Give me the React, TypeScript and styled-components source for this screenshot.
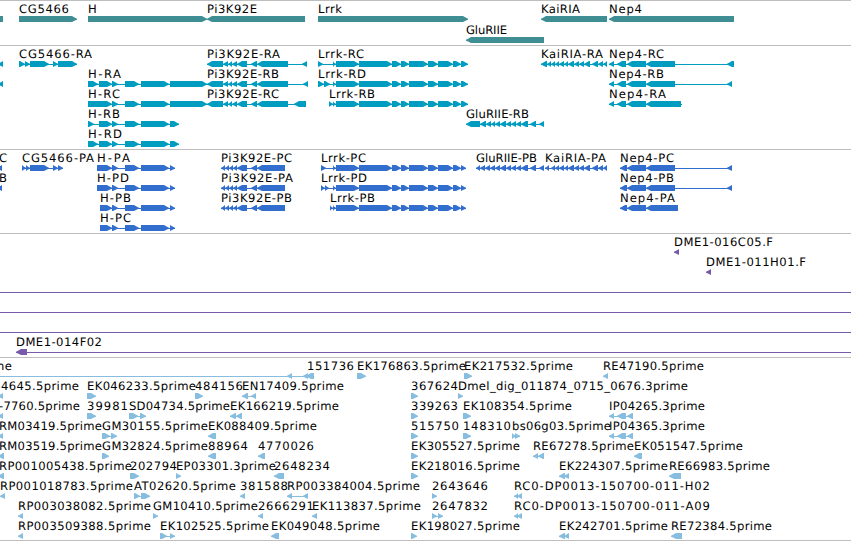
import React from 'react';
import styled, { createGlobalStyle } from 'styled-components';

const GlobalStyle = createGlobalStyle`
  body { margin: 0; background: #fff; overflow: hidden; }
`;

const Browser = styled.main`
  display: flex;
  flex-direction: column;
  width: 851px;
  height: 541px;
  overflow: hidden;
  background: #fff;
  border-bottom: 1px solid #bebebe;
  box-sizing: border-box;
`;

const Track = styled.section<{ $height: number; $color: string; $gap?: number }>`
  display: flex;
  flex-direction: column;
  flex: none;
  box-sizing: border-box;
  height: ${p => p.$height}px;
  padding-top: 1px;
  gap: ${p => p.$gap ?? 0}px;
  border-top: 1px solid #bebebe;
  color: ${p => p.$color};
`;

const Lane = styled.svg`
  display: block;
  flex: none;
  width: 851px;
  height: 20px;
  overflow: visible;
  fill: currentColor;
`;

const Name = styled.text`
  fill: #000;
  font-family: 'DejaVu Sans', sans-serif;
  font-size: 11.6px;
  text-rendering: geometricPrecision;
  white-space: pre;
`;

type Feature = {
  name?: string;
  x?: number;
  end?: number;
  dir?: 1 | -1;
  exons?: number[][];
  line?: [number, number];
};

/* A block whose last five pixels narrow to a point in the reading direction. */
function Exon({ a, b, dir }: { a: number; b: number; dir: 1 | -1 }) {
  const head = Math.min(5, b - a);
  const d = dir === 1
    ? `M${a} 14H${b - head}L${b - 2} 15.7L${b} 16.7V17.7L${b - 2} 18.6L${b - head} 20H${a}Z`
    : `M${b} 14H${a + head}L${a + 2} 15.7L${a} 16.7V17.7L${a + 2} 18.6L${a + head} 20H${b}Z`;
  return <path d={d} />;
}

function Gene({ f }: { f: Feature }) {
  const exons = f.exons ?? [];
  const span = f.line ?? (exons.length > 1 ? [exons[0][0], exons[exons.length - 1][1]] : null);
  return (
    <g>
      {span && <rect x={span[0]} y={17} width={span[1] - span[0]} height={1} />}
      {exons.map(([a, b], i) => <Exon key={i} a={a} b={b} dir={f.dir ?? 1} />)}
      {f.name && (
        <Name x={f.x} y={11} textLength={f.end! - f.x!} lengthAdjust="spacing">{f.name}</Name>
      )}
    </g>
  );
}

const feat = (name: string, x: number, end: number, dir: 1 | -1, exons: number[][]): Feature =>
  ({ name, x, end, dir, exons });
const stub = (dir: 1 | -1, exons: number[][]): Feature => ({ dir, exons });

const genes: Feature[][] = [
  [
    stub(-1, [[-8, 3]]),
    feat('CG5466', 19, 69, 1, [[19, 77]]),
    feat('H', 88, 97, 1, [[88, 207]]),
    feat('Pi3K92E', 207, 257, -1, [[207, 305]]),
    feat('Lrrk', 318, 342, 1, [[318, 468]]),
    feat('KaiRIA', 541, 580, -1, [[541, 607]]),
    feat('Nep4', 609, 642, -1, [[609, 734]]),
  ],
  [feat('GluRIIE', 466, 507, -1, [[466, 544]])],
];

const hTail = [[99, 112], [112, 118], [125, 139], [141, 169]];
const piMid = [[207, 223], [223, 228], [228, 232], [232, 237], [237, 247], [251, 257], [257, 288]];
const lrrk = [[333, 336], [336, 359], [359, 392], [392, 401], [401, 409], [409, 428], [428, 438], [438, 453], [453, 461], [461, 468]];
const kai = [[547, 551], [551, 555], [555, 559], [559, 564], [564, 568], [568, 574], [574, 579], [579, 584], [584, 590], [592, 598], [598, 603], [603, 607]];
const nep = [[609, 614], [617, 626], [627, 646]];

const transcripts: Feature[][] = [
  [
    stub(-1, [[-2, 3]]),
    feat('CG5466-RA', 19, 92, 1, [[19, 25], [25, 30], [30, 49], [53, 58], [58, 77]]),
    feat('Pi3K92E-RA', 207, 280, -1, [...piMid, [302, 307]]),
    feat('Lrrk-RC', 318, 364, 1, [[318, 323], ...lrrk]),
    feat('KaiRIA-RA', 541, 603, -1, [[541, 547], ...kai]),
    feat('Nep4-RC', 609, 664, -1, [...nep, [646, 675], [727, 734]]),
  ],
  [
    stub(-1, [[-2, 3]]),
    feat('H-RA', 88, 121, 1, [[88, 98], ...hTail, [170, 207]]),
    feat('Pi3K92E-RB', 207, 279, -1, [...piMid, [303, 308]]),
    feat('Lrrk-RD', 318, 366, 1, [[318, 324], [324, 330], ...lrrk]),
    feat('Nep4-RB', 609, 664, -1, [...nep, [646, 675], [727, 732]]),
  ],
  [
    feat('H-RC', 88, 120, 1, [[88, 112], ...hTail.slice(1), [170, 207]]),
    feat('Pi3K92E-RC', 207, 279, -1, [...piMid, [294, 306]]),
    feat('Lrrk-RB', 329, 375, 1, [[329, 333], ...lrrk]),
    { ...feat('Nep4-RA', 609, 666, -1, [...nep, [646, 681]]), line: [609, 682] },
  ],
  [
    feat('H-RB', 88, 120, 1, [[88, 94], ...hTail, [170, 179]]),
    feat('GluRIIE-RB', 466, 529, -1, [[466, 480], [480, 486], [486, 491], [491, 495], [495, 500], [500, 506], [506, 511], [511, 516], [516, 521], [521, 528], [530, 536], [539, 544]]),
  ],
  [feat('H-RD', 88, 122, 1, [[88, 98], ...hTail, [170, 179]])],
];

const piP = [[221, 225], [225, 229], [229, 233], [233, 237], [237, 247], [251, 257], [257, 285]];
const lrrkP = [...lrrk.slice(0, -1), [461, 466]];
const nepP = [[620, 627], [627, 646]];
const proteins: Feature[][] = [
  [
    { name: 'C', x: -1, end: 7, dir: -1, exons: [[-3, 2]] },
    feat('CG5466-PA', 22, 94, 1, [[22, 26], [26, 30], [30, 49], [53, 58], [58, 63]]),
    feat('H-PA', 97, 130, 1, [[97, 112], ...hTail.slice(1), [170, 175]]),
    feat('Pi3K92E-PC', 221, 292, -1, piP),
    feat('Lrrk-PC', 321, 366, 1, [[321, 326], ...lrrkP]),
    feat('GluRIIE-PB', 476, 537, -1, [[476, 480], [480, 485], [485, 490], [490, 495], [495, 500], [500, 506], [506, 511], [511, 516], [516, 521], [521, 528], [530, 536], [539, 544]]),
    feat('KaiRIA-PA', 545, 606, -1, [[545, 549], ...kai.slice(1)]),
    feat('Nep4-PC', 620, 674, -1, [...nepP, [646, 675], [727, 732]]),
  ],
  [
    { name: 'B', x: -1, end: 7, dir: -1, exons: [[-3, 2]] },
    feat('H-PD', 97, 129, 1, [[97, 112], ...hTail.slice(1), [170, 175]]),
    feat('Pi3K92E-PA', 221, 293, -1, piP),
    feat('Lrrk-PD', 321, 367, 1, [[321, 325], [325, 329], ...lrrkP]),
    feat('Nep4-PB', 620, 674, -1, [...nepP, [646, 675], [727, 732]]),
  ],
  [
    feat('H-PB', 100, 131, 1, [[100, 112], ...hTail.slice(1), [170, 175]]),
    feat('Pi3K92E-PB', 221, 292, -1, piP),
    feat('Lrrk-PB', 330, 375, 1, [[330, 333], ...lrrkP]),
    feat('Nep4-PA', 620, 675, -1, [...nepP, [646, 678]]),
  ],
  [feat('H-PC', 100, 131, 1, [[100, 112], ...hTail.slice(1), [170, 175]])],
];

const full: Feature = { line: [0, 851] };
const bacs: Feature[][] = [
  [feat('DME1-016C05.F', 674, 773, -1, [[674, 679]])],
  [feat('DME1-011H01.F', 706, 806, -1, [[706, 711]])],
  [full],
  [full],
  [full],
  [{ name: 'DME1-014F02', x: 16, end: 102, dir: -1, exons: [[16, 27]], line: [16, 851] }],
];

const ests: Feature[][] = [
  [
    { name: 'me', x: -7, end: 12, line: [0, 314], dir: -1, exons: [[287, 292], [303, 308], [306, 314]] },
    feat('151736', 307, 354, 1, []),
    feat('EK176863.5prime', 357, 466, 1, [[357, 366]]),
    feat('EK217532.5prime', 464, 573, 1, [[464, 472]]),
    feat('RE47190.5prime', 603, 704, -1, [[603, 608]]),
  ],
  [
    { name: '4645.5prime', x: 1, end: 79, dir: -1, exons: [[-2, 3]] },
    feat('EK046233.5prime', 87, 196, 1, [[87, 96]]),
    feat('484156', 195, 243, 1, [[195, 203]]),
    feat('EN17409.5prime', 242, 344, -1, [[242, 248], [251, 256]]),
    feat('367624', 411, 458, 1, [[411, 418]]),
    feat('Dmel_dig_011874_0715_0676.3prime', 458, 688, 1, [[458, 463]]),
  ],
  [
    { name: '-7760.5prime', x: -1, end: 80, dir: -1, exons: [[-2, 3]] },
    feat('39981', 87, 128, 1, [[87, 96]]),
    feat('SD04734.5prime', 129, 230, 1, [[129, 138], [140, 146]]),
    feat('EK166219.5prime', 230, 339, -1, [[230, 236], [236, 242]]),
    feat('339263', 411, 458, 1, [[411, 418]]),
    feat('EK108354.5prime', 463, 572, 1, [[463, 471]]),
    feat('IP04265.3prime', 609, 705, -1, [[609, 614], [617, 626], [627, 633]]),
  ],
  [
    feat('RM03419.5prime', -1, 102, -1, [[-2, 3]]),
    feat('GM30155.5prime', 102, 208, 1, [[102, 110], [111, 117]]),
    feat('EK088409.5prime', 208, 317, -1, [[208, 216]]),
    feat('515750', 411, 459, 1, [[411, 418]]),
    feat('148310', 463, 511, 1, [[463, 471]]),
    feat('bs06g03.5prime', 512, 611, 1, [[512, 516], [515, 520]]),
    feat('IP04365.3prime', 609, 705, -1, [[609, 614], [617, 626], [627, 633]]),
  ],
  [
    feat('RM03519.5prime', -1, 102, -1, [[-2, 4]]),
    feat('GM32824.5prime', 102, 208, 1, [[102, 109]]),
    feat('88964', 208, 248, -1, [[208, 216]]),
    feat('4770026', 258, 314, -1, [[258, 265]]),
    feat('EK305527.5prime', 411, 520, 1, [[411, 418]]),
    feat('RE67278.5prime', 533, 634, -1, [[533, 538], [538, 544]]),
    feat('EK051547.5prime', 634, 743, -1, [[634, 642]]),
  ],
  [
    feat('RP001005438.5prime', -1, 132, -1, [[-2, 4]]),
    feat('202794', 130, 177, 1, [[130, 139]]),
    feat('EP03301.3prime', 176, 276, 1, [[176, 181]]),
    feat('2648234', 274, 330, -1, [[274, 284]]),
    feat('EK218016.5prime', 411, 520, 1, [[411, 418]]),
    feat('EK224307.5prime', 559, 668, -1, [[559, 565], [564, 569]]),
    feat('RE66983.5prime', 669, 770, -1, [[669, 681]]),
  ],
  [
    feat('RP001018783.5prime', 0, 133, -1, [[0, 5]]),
    feat('AT02620.5prime', 134, 236, 1, [[134, 140], [141, 150]]),
    feat('381588', 240, 288, -1, [[240, 245]]),
    feat('RP003384004.5prime', 287, 420, -1, [[287, 292], [303, 308]]),
    feat('2643646', 432, 488, 1, [[432, 437]]),
    feat('RC0-DP0013-150700-011-H02', 514, 710, -1, [[514, 518], [517, 522]]),
  ],
  [
    feat('RP003038082.5prime', 18, 151, -1, [[18, 23]]),
    feat('GM10410.5prime', 153, 258, 1, [[153, 158]]),
    feat('2666291', 258, 314, -1, [[258, 263]]),
    feat('EK113837.5prime', 312, 421, -1, [[312, 317]]),
    feat('2647832', 432, 488, 1, [[432, 437], [438, 443]]),
    feat('RC0-DP0013-150700-011-A09', 514, 710, -1, [[514, 518], [517, 522]]),
  ],
  [
    feat('RP003509388.5prime', 18, 151, -1, [[18, 23]]),
    feat('EK102525.5prime', 160, 269, 1, [[160, 167], [170, 175]]),
    feat('EK049048.5prime', 271, 380, -1, [[271, 279]]),
    feat('EK198027.5prime', 411, 520, 1, [[411, 417]]),
    feat('EK242701.5prime', 559, 668, -1, [[559, 565], [564, 569]]),
    feat('RE72384.5prime', 671, 772, -1, [[671, 682]]),
  ],
];

const tracks = [
  { height: 45, color: '#3f8e93', gap: 1, lanes: genes },
  { height: 104, color: '#009dc0', lanes: transcripts },
  { height: 84, color: '#326ecd', lanes: proteins },
  { height: 124, color: '#785aaa', lanes: bacs },
  { height: 183, color: '#87bddf', lanes: ests },
];

export default function App() {
  return (
    <>
      <GlobalStyle />
      <Browser>
        {tracks.map((t, i) => (
          <Track key={i} $height={t.height} $color={t.color} $gap={t.gap}>
            {t.lanes.map((lane, j) => (
              <Lane key={j}>
                {lane.map((f, k) => <Gene key={k} f={f} />)}
              </Lane>
            ))}
          </Track>
        ))}
      </Browser>
    </>
  );
}
